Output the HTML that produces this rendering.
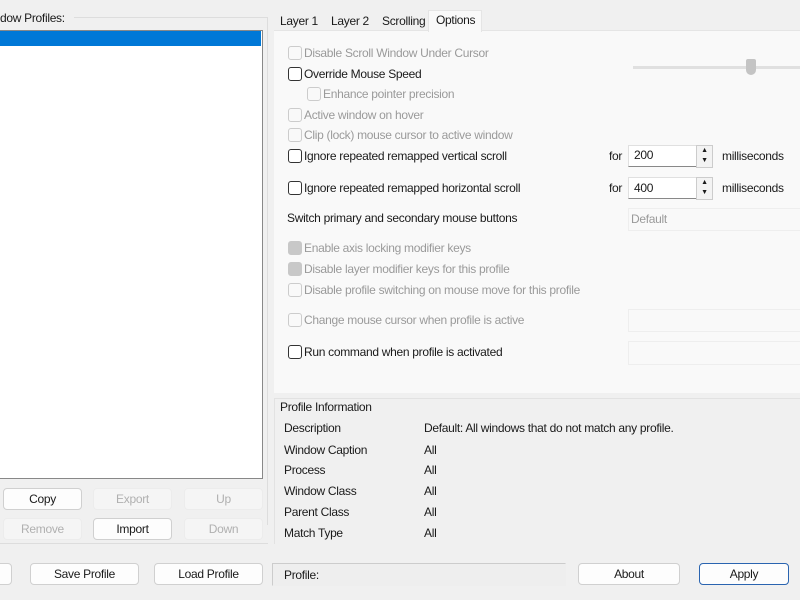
<!DOCTYPE html>
<html><head><style>
body{margin:0;width:800px;height:600px;background:#f0f0f0;font-family:"Liberation Sans",sans-serif;font-size:12px;letter-spacing:-0.3px;color:#1a1a1a;position:relative;overflow:hidden}
.a{position:absolute;white-space:nowrap}
.cb{position:absolute;width:12px;height:12px;border:1px solid #333;border-radius:3px;background:#fff}
.cb.d{border-color:#ccc;background:#f9f9f9}
.cb.c{border-color:#c8c8c8;background:#c8c8c8}
.g{color:#9a9a9a}
.btn{position:absolute;height:20px;background:#fdfdfd;border:1px solid #d0d0d0;border-radius:4px;text-align:center;line-height:20px}
.btn.d{color:#b0b0b0;background:#f5f5f5;border-color:#ececec}
.inp{position:absolute;background:#fff;border:1px solid #e0e0e0;border-bottom:1px solid #888}
</style></head><body>
<div class="a" style="left:0;top:11px">dow Profiles:</div>
<div class="a" style="left:74px;top:17px;width:194px;border-top:1px solid #ddd"></div>
<div class="a" style="left:267px;top:17px;height:508px;border-left:1px solid #ddd"></div>
<div class="a" style="left:0;top:30px;width:262px;height:447px;background:#fff;border:1px solid #888;border-left:none"></div>
<div class="a" style="left:0;top:31px;width:261px;height:15px;background:#0078d7"></div>
<div class="btn" style="left:3px;top:488px;width:77px">Copy</div>
<div class="btn d" style="left:93px;top:488px;width:77px">Export</div>
<div class="btn d" style="left:184px;top:488px;width:77px">Up</div>
<div class="btn d" style="left:3px;top:518px;width:77px">Remove</div>
<div class="btn" style="left:93px;top:518px;width:77px">Import</div>
<div class="btn d" style="left:184px;top:518px;width:77px">Down</div>

<div class="a" style="left:274px;top:30px;width:526px;height:362px;background:#f9f9f9;border-top:1px solid #e5e5e5"></div>
<div class="a" style="left:280px;top:14px">Layer 1</div>
<div class="a" style="left:331px;top:14px">Layer 2</div>
<div class="a" style="left:382px;top:14px">Scrolling</div>
<div class="a" style="left:428px;top:10px;width:52px;height:21px;background:#f9f9f9;border:1px solid #e5e5e5;border-bottom:none"></div>
<div class="a" style="left:436px;top:13px">Options</div>

<div class="cb d" style="left:288px;top:46px"></div><div class="a g" style="left:304px;top:46px">Disable Scroll Window Under Cursor</div>
<div class="cb" style="left:288px;top:67px"></div><div class="a" style="left:304px;top:67px">Override Mouse Speed</div>
<div class="cb d" style="left:307px;top:87px"></div><div class="a g" style="left:323px;top:87px">Enhance pointer precision</div>
<div class="cb d" style="left:288px;top:108px"></div><div class="a g" style="left:304px;top:108px">Active window on hover</div>
<div class="cb d" style="left:288px;top:128px"></div><div class="a g" style="left:304px;top:128px">Clip (lock) mouse cursor to active window</div>
<div class="cb" style="left:288px;top:149px"></div><div class="a" style="left:304px;top:149px">Ignore repeated remapped vertical scroll</div>
<div class="cb" style="left:288px;top:181px"></div><div class="a" style="left:304px;top:181px">Ignore repeated remapped horizontal scroll</div>
<div class="a" style="left:287px;top:211px">Switch primary and secondary mouse buttons</div>
<div class="cb c" style="left:288px;top:241px"></div><div class="a g" style="left:304px;top:241px">Enable axis locking modifier keys</div>
<div class="cb c" style="left:288px;top:262px"></div><div class="a g" style="left:304px;top:262px">Disable layer modifier keys for this profile</div>
<div class="cb d" style="left:288px;top:283px"></div><div class="a g" style="left:304px;top:283px">Disable profile switching on mouse move for this profile</div>
<div class="cb d" style="left:288px;top:313px"></div><div class="a g" style="left:304px;top:313px">Change mouse cursor when profile is active</div>
<div class="cb" style="left:288px;top:345px"></div><div class="a" style="left:304px;top:345px">Run command when profile is activated</div>

<div class="a" style="left:633px;top:66px;width:167px;height:3px;background:#e0e0e0"></div>
<div class="a" style="left:746px;top:59px;width:10px;height:16px;background:#c4c4c4;border-radius:2px 2px 5px 5px"></div>

<div class="a" style="left:609px;top:149px">for</div>
<div class="inp" style="left:628px;top:145px;width:67px;height:20px"></div>
<div class="a" style="left:634px;top:148px">200</div>
<div class="a" style="left:696px;top:145px;width:15px;height:21px;border:1px solid #ccc;background:#f3f3f3;font-size:7px;text-align:center;line-height:10px">▲<br>▼</div>
<div class="a" style="left:722px;top:149px">milliseconds</div>
<div class="a" style="left:609px;top:181px">for</div>
<div class="inp" style="left:628px;top:177px;width:67px;height:20px"></div>
<div class="a" style="left:634px;top:181px">400</div>
<div class="a" style="left:696px;top:177px;width:15px;height:21px;border:1px solid #ccc;background:#f3f3f3;font-size:7px;text-align:center;line-height:10px">▲<br>▼</div>
<div class="a" style="left:722px;top:181px">milliseconds</div>
<div class="a" style="left:628px;top:208px;width:172px;height:21px;border:1px solid #eee;border-right:none"></div>
<div class="a g" style="left:631px;top:212px">Default</div>
<div class="a" style="left:628px;top:309px;width:172px;height:21px;border:1px solid #eee;border-right:none"></div>
<div class="a" style="left:628px;top:341px;width:172px;height:22px;border:1px solid #eee;border-right:none"></div>

<div class="a" style="left:274px;top:398px;width:526px;height:145px;border-left:1px solid #e2e2e2;border-top:1px solid #e2e2e2"></div>
<div class="a" style="left:280px;top:400px;background:#f0f0f0;padding-right:2px">Profile Information</div>
<div class="a" style="left:284px;top:421px">Description</div><div class="a" style="left:424px;top:421px">Default: All windows that do not match any profile.</div>
<div class="a" style="left:284px;top:443px">Window Caption</div><div class="a" style="left:424px;top:443px">All</div>
<div class="a" style="left:284px;top:463px">Process</div><div class="a" style="left:424px;top:463px">All</div>
<div class="a" style="left:284px;top:484px">Window Class</div><div class="a" style="left:424px;top:484px">All</div>
<div class="a" style="left:284px;top:505px">Parent Class</div><div class="a" style="left:424px;top:505px">All</div>
<div class="a" style="left:284px;top:526px">Match Type</div><div class="a" style="left:424px;top:526px">All</div>
<div class="a" style="left:0;top:543px;width:268px;border-top:1px solid #ddd"></div>

<div class="btn" style="left:-6px;top:563px;width:16px"></div>
<div class="btn" style="left:30px;top:563px;width:107px">Save Profile</div>
<div class="btn" style="left:154px;top:563px;width:107px">Load Profile</div>
<div class="a" style="left:272px;top:563px;width:292px;height:21px;border:1px solid #ccc;border-right-color:#eee;border-bottom-color:#eee;background:#eeeeee"></div>
<div class="a" style="left:284px;top:568px">Profile:</div>
<div class="btn" style="left:578px;top:563px;width:100px">About</div>
<div class="btn" style="left:699px;top:563px;width:88px;border-color:#2a64b0">Apply</div>
</body></html>
